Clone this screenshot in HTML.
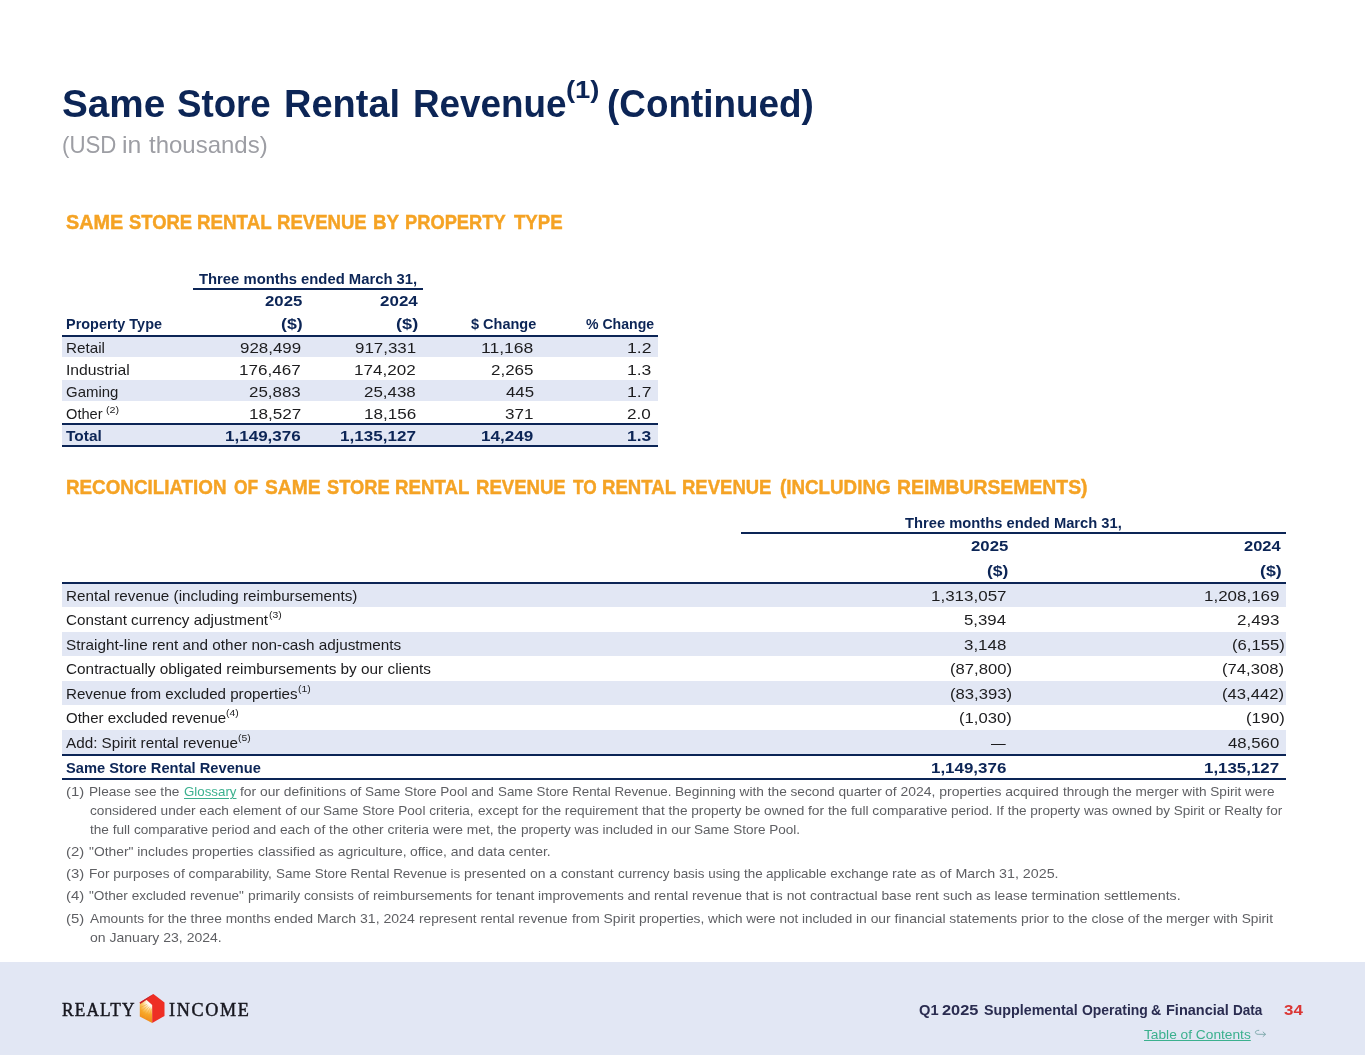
<!DOCTYPE html>
<html lang="en"><head><meta charset="utf-8"><title>Same Store Rental Revenue (Continued)</title>
<style>
html,body{margin:0;padding:0;background:#fff;}
body{width:1365px;height:1055px;position:relative;overflow:hidden;font-family:"Liberation Sans",sans-serif;}
.t{position:absolute;white-space:pre;line-height:1;transform-origin:0 0;}
.r{position:absolute;}
#sheet{position:absolute;left:0;top:0;width:1365px;height:1055px;will-change:transform;}
</style></head>
<body>
<div id="sheet">
<div class="r" style="left:0px;top:962px;width:1365px;height:93px;background:#e2e7f4;"></div>
<div class="t" style="left:61.62px;top:84.00px;font-size:39px;font-weight:700;color:#0c2556;transform:scaleX(0.9926);">Same </div>
<div class="t" style="left:177.37px;top:84.00px;font-size:39px;font-weight:700;color:#0c2556;transform:scaleX(0.9406);">Store </div>
<div class="t" style="left:284.49px;top:84.00px;font-size:39px;font-weight:700;color:#0c2556;transform:scaleX(0.9736);">Rental </div>
<div class="t" style="left:413.17px;top:84.00px;font-size:39px;font-weight:700;color:#0c2556;transform:scaleX(0.9447);">Revenue</div>
<div class="t" style="left:566.36px;top:78.00px;font-size:24px;font-weight:700;color:#0c2556;transform:scaleX(1.1411);">(1)</div>
<div class="t" style="left:606.79px;top:84.00px;font-size:39px;font-weight:700;color:#0c2556;transform:scaleX(0.9449);">(Continued)</div>
<div class="t" style="left:61.52px;top:134.00px;font-size:23.4px;font-weight:400;color:#9d9ea4;transform:scaleX(0.9518);">(USD </div>
<div class="t" style="left:122.46px;top:134.00px;font-size:23.4px;font-weight:400;color:#9d9ea4;transform:scaleX(1.0611);">in </div>
<div class="t" style="left:149.04px;top:134.00px;font-size:23.4px;font-weight:400;color:#9d9ea4;transform:scaleX(1.0252);">thousands)</div>
<div class="t" style="left:65.85px;top:212.00px;font-size:20.5px;font-weight:700;color:#f5a324;transform:scaleX(0.9661);-webkit-text-stroke:0.45px #f5a324;">SAME </div>
<div class="t" style="left:128.58px;top:212.00px;font-size:20.5px;font-weight:700;color:#f5a324;transform:scaleX(0.8973);-webkit-text-stroke:0.45px #f5a324;">STORE </div>
<div class="t" style="left:196.76px;top:212.00px;font-size:20.5px;font-weight:700;color:#f5a324;transform:scaleX(0.9151);-webkit-text-stroke:0.45px #f5a324;">RENTAL </div>
<div class="t" style="left:277.37px;top:212.00px;font-size:20.5px;font-weight:700;color:#f5a324;transform:scaleX(0.9056);-webkit-text-stroke:0.45px #f5a324;">REVENUE </div>
<div class="t" style="left:372.76px;top:212.00px;font-size:20.5px;font-weight:700;color:#f5a324;transform:scaleX(0.9178);-webkit-text-stroke:0.45px #f5a324;">BY </div>
<div class="t" style="left:405.39px;top:212.00px;font-size:20.5px;font-weight:700;color:#f5a324;transform:scaleX(0.8920);-webkit-text-stroke:0.45px #f5a324;">PROPERTY </div>
<div class="t" style="left:514.10px;top:212.00px;font-size:20.5px;font-weight:700;color:#f5a324;transform:scaleX(0.9082);-webkit-text-stroke:0.45px #f5a324;">TYPE</div>
<div class="r" style="left:62px;top:337px;width:596px;height:20px;background:#e2e7f4;"></div>
<div class="r" style="left:62px;top:380px;width:596px;height:21px;background:#e2e7f4;"></div>
<div class="r" style="left:62px;top:425px;width:596px;height:20px;background:#e2e7f4;"></div>
<div class="r" style="left:193px;top:288px;width:230px;height:2px;background:#0c2556;"></div>
<div class="r" style="left:62px;top:335px;width:596px;height:2px;background:#0c2556;"></div>
<div class="r" style="left:62px;top:423px;width:596px;height:2px;background:#0c2556;"></div>
<div class="r" style="left:62px;top:445px;width:596px;height:2px;background:#0c2556;"></div>
<div class="t" style="left:198.84px;top:271.00px;font-size:15.4px;font-weight:700;color:#0c2556;transform:scaleX(0.9626);">Three months ended March 31,</div>
<div class="t" style="left:265.43px;top:293.00px;font-size:15.4px;font-weight:700;color:#0c2556;transform:scaleX(1.0898);">2025</div>
<div class="t" style="left:380.02px;top:293.00px;font-size:15.4px;font-weight:700;color:#0c2556;transform:scaleX(1.1026);">2024</div>
<div class="t" style="left:66.20px;top:316.00px;font-size:15.4px;font-weight:700;color:#0c2556;transform:scaleX(0.9378);">Property Type</div>
<div class="t" style="left:281.43px;top:316.00px;font-size:15.4px;font-weight:700;color:#0c2556;transform:scaleX(1.1559);">($)</div>
<div class="t" style="left:396.41px;top:316.00px;font-size:15.4px;font-weight:700;color:#0c2556;transform:scaleX(1.1790);">($)</div>
<div class="t" style="left:470.51px;top:316.00px;font-size:15.4px;font-weight:700;color:#0c2556;transform:scaleX(0.9423);">$ Change</div>
<div class="t" style="left:585.66px;top:316.00px;font-size:15.4px;font-weight:700;color:#0c2556;transform:scaleX(0.9155);">% Change</div>
<div class="t" style="left:66.30px;top:341.00px;font-size:14.8px;font-weight:400;color:#1c1c1e;transform:scaleX(1.0308);">Retail</div>
<div class="t" style="left:239.72px;top:340.00px;font-size:15.4px;font-weight:400;color:#1c1c1e;transform:scaleX(1.0977);">928,499</div>
<div class="t" style="left:354.72px;top:340.00px;font-size:15.4px;font-weight:400;color:#1c1c1e;transform:scaleX(1.0980);">917,331</div>
<div class="t" style="left:481.47px;top:340.00px;font-size:15.4px;font-weight:400;color:#1c1c1e;transform:scaleX(1.1383);">11,168</div>
<div class="t" style="left:626.66px;top:340.00px;font-size:15.4px;font-weight:400;color:#1c1c1e;transform:scaleX(1.1457);">1.2</div>
<div class="t" style="left:66.30px;top:363.00px;font-size:14.8px;font-weight:400;color:#1c1c1e;transform:scaleX(1.0615);">Industrial</div>
<div class="t" style="left:239.20px;top:362.00px;font-size:15.4px;font-weight:400;color:#1c1c1e;transform:scaleX(1.1081);">176,467</div>
<div class="t" style="left:354.20px;top:362.00px;font-size:15.4px;font-weight:400;color:#1c1c1e;transform:scaleX(1.1081);">174,202</div>
<div class="t" style="left:491.25px;top:362.00px;font-size:15.4px;font-weight:400;color:#1c1c1e;transform:scaleX(1.1021);">2,265</div>
<div class="t" style="left:626.67px;top:362.00px;font-size:15.4px;font-weight:400;color:#1c1c1e;transform:scaleX(1.1394);">1.3</div>
<div class="t" style="left:66.30px;top:385.00px;font-size:14.8px;font-weight:400;color:#1c1c1e;transform:scaleX(1.0106);">Gaming</div>
<div class="t" style="left:248.95px;top:384.00px;font-size:15.4px;font-weight:400;color:#1c1c1e;transform:scaleX(1.0998);">25,883</div>
<div class="t" style="left:363.95px;top:384.00px;font-size:15.4px;font-weight:400;color:#1c1c1e;transform:scaleX(1.0998);">25,438</div>
<div class="t" style="left:505.63px;top:384.00px;font-size:15.4px;font-weight:400;color:#1c1c1e;transform:scaleX(1.0925);">445</div>
<div class="t" style="left:626.66px;top:384.00px;font-size:15.4px;font-weight:400;color:#1c1c1e;transform:scaleX(1.1457);">1.7</div>
<div class="t" style="left:66.30px;top:407.00px;font-size:14.8px;font-weight:400;color:#1c1c1e;transform:scaleX(0.9897);">Other</div>
<div class="t" style="left:248.50px;top:406.00px;font-size:15.4px;font-weight:400;color:#1c1c1e;transform:scaleX(1.1122);">18,527</div>
<div class="t" style="left:363.50px;top:406.00px;font-size:15.4px;font-weight:400;color:#1c1c1e;transform:scaleX(1.1096);">18,156</div>
<div class="t" style="left:505.35px;top:406.00px;font-size:15.4px;font-weight:400;color:#1c1c1e;transform:scaleX(1.1083);">371</div>
<div class="t" style="left:627.14px;top:406.00px;font-size:15.4px;font-weight:400;color:#1c1c1e;transform:scaleX(1.1123);">2.0</div>
<div class="t" style="left:105.73px;top:406.00px;font-size:9px;font-weight:400;color:#1c1c1e;transform:scaleX(1.1939);">(2)</div>
<div class="t" style="left:66.30px;top:429.00px;font-size:14.8px;font-weight:700;color:#0c2556;transform:scaleX(1.0447);">Total</div>
<div class="t" style="left:224.84px;top:428.00px;font-size:15.4px;font-weight:700;color:#0c2556;transform:scaleX(1.1062);">1,149,376</div>
<div class="t" style="left:339.84px;top:428.00px;font-size:15.4px;font-weight:700;color:#0c2556;transform:scaleX(1.1082);">1,135,127</div>
<div class="t" style="left:481.24px;top:428.00px;font-size:15.4px;font-weight:700;color:#0c2556;transform:scaleX(1.1127);">14,249</div>
<div class="t" style="left:626.72px;top:428.00px;font-size:15.4px;font-weight:700;color:#0c2556;transform:scaleX(1.1301);">1.3</div>
<div class="t" style="left:66.46px;top:477.00px;font-size:20.5px;font-weight:700;color:#f5a324;transform:scaleX(0.9171);-webkit-text-stroke:0.45px #f5a324;">RECONCILIATION </div>
<div class="t" style="left:233.59px;top:477.00px;font-size:20.5px;font-weight:700;color:#f5a324;transform:scaleX(0.8478);-webkit-text-stroke:0.45px #f5a324;">OF </div>
<div class="t" style="left:264.56px;top:477.00px;font-size:20.5px;font-weight:700;color:#f5a324;transform:scaleX(0.9385);-webkit-text-stroke:0.45px #f5a324;">SAME </div>
<div class="t" style="left:326.59px;top:477.00px;font-size:20.5px;font-weight:700;color:#f5a324;transform:scaleX(0.8929);-webkit-text-stroke:0.45px #f5a324;">STORE </div>
<div class="t" style="left:395.37px;top:477.00px;font-size:20.5px;font-weight:700;color:#f5a324;transform:scaleX(0.9101);-webkit-text-stroke:0.45px #f5a324;">RENTAL </div>
<div class="t" style="left:475.87px;top:477.00px;font-size:20.5px;font-weight:700;color:#f5a324;transform:scaleX(0.9056);-webkit-text-stroke:0.45px #f5a324;">REVENUE </div>
<div class="t" style="left:572.71px;top:477.00px;font-size:20.5px;font-weight:700;color:#f5a324;transform:scaleX(0.8436);-webkit-text-stroke:0.45px #f5a324;">TO </div>
<div class="t" style="left:602.17px;top:477.00px;font-size:20.5px;font-weight:700;color:#f5a324;transform:scaleX(0.9076);-webkit-text-stroke:0.45px #f5a324;">RENTAL </div>
<div class="t" style="left:682.48px;top:477.00px;font-size:20.5px;font-weight:700;color:#f5a324;transform:scaleX(0.9025);-webkit-text-stroke:0.45px #f5a324;">REVENUE </div>
<div class="t" style="left:779.98px;top:477.00px;font-size:20.5px;font-weight:700;color:#f5a324;transform:scaleX(0.9160);-webkit-text-stroke:0.45px #f5a324;">(INCLUDING </div>
<div class="t" style="left:896.72px;top:477.00px;font-size:20.5px;font-weight:700;color:#f5a324;transform:scaleX(0.9451);-webkit-text-stroke:0.45px #f5a324;">REIMBURSEMENTS)</div>
<div class="r" style="left:62px;top:584px;width:1224px;height:23px;background:#e2e7f4;"></div>
<div class="r" style="left:62px;top:632px;width:1224px;height:24px;background:#e2e7f4;"></div>
<div class="r" style="left:62px;top:681px;width:1224px;height:24px;background:#e2e7f4;"></div>
<div class="r" style="left:62px;top:730px;width:1224px;height:24px;background:#e2e7f4;"></div>
<div class="r" style="left:741px;top:532px;width:545px;height:2px;background:#0c2556;"></div>
<div class="r" style="left:62px;top:582px;width:1224px;height:2px;background:#0c2556;"></div>
<div class="r" style="left:62px;top:754px;width:1224px;height:2px;background:#0c2556;"></div>
<div class="r" style="left:62px;top:778px;width:1224px;height:2px;background:#0c2556;"></div>
<div class="t" style="left:904.84px;top:515.30px;font-size:15.4px;font-weight:700;color:#0c2556;transform:scaleX(0.9568);">Three months ended March 31,</div>
<div class="t" style="left:971.13px;top:538.30px;font-size:15.4px;font-weight:700;color:#0c2556;transform:scaleX(1.0898);">2025</div>
<div class="t" style="left:1244.44px;top:538.30px;font-size:15.4px;font-weight:700;color:#0c2556;transform:scaleX(1.0699);">2024</div>
<div class="t" style="left:987.44px;top:563.00px;font-size:15.4px;font-weight:700;color:#0c2556;transform:scaleX(1.1385);">($)</div>
<div class="t" style="left:1260.13px;top:563.00px;font-size:15.4px;font-weight:700;color:#0c2556;transform:scaleX(1.1559);">($)</div>
<div class="t" style="left:66.30px;top:589.00px;font-size:14.8px;font-weight:400;color:#1c1c1e;transform:scaleX(1.0298);">Rental revenue (including reimbursements)</div>
<div class="t" style="left:931.01px;top:588.00px;font-size:15.4px;font-weight:400;color:#1c1c1e;transform:scaleX(1.1031);">1,313,057</div>
<div class="t" style="left:1203.61px;top:588.00px;font-size:15.4px;font-weight:400;color:#1c1c1e;transform:scaleX(1.1023);">1,208,169</div>
<div class="t" style="left:66.30px;top:613.00px;font-size:14.8px;font-weight:400;color:#1c1c1e;transform:scaleX(1.0281);">Constant currency adjustment</div>
<div class="t" style="left:268.76px;top:611.00px;font-size:8.8px;font-weight:400;color:#1c1c1e;transform:scaleX(1.1784);">(3)</div>
<div class="t" style="left:964.13px;top:612.00px;font-size:15.4px;font-weight:400;color:#1c1c1e;transform:scaleX(1.0921);">5,394</div>
<div class="t" style="left:1236.55px;top:612.00px;font-size:15.4px;font-weight:400;color:#1c1c1e;transform:scaleX(1.1030);">2,493</div>
<div class="t" style="left:66.30px;top:638.00px;font-size:14.8px;font-weight:400;color:#1c1c1e;transform:scaleX(1.0345);">Straight-line rent and other non-cash adjustments</div>
<div class="t" style="left:964.16px;top:637.00px;font-size:15.4px;font-weight:400;color:#1c1c1e;transform:scaleX(1.0975);">3,148</div>
<div class="t" style="left:1231.67px;top:637.00px;font-size:15.4px;font-weight:400;color:#1c1c1e;transform:scaleX(1.0799);">(6,155)</div>
<div class="t" style="left:66.30px;top:662.00px;font-size:14.8px;font-weight:400;color:#1c1c1e;transform:scaleX(1.0368);">Contractually obligated reimbursements by our clients</div>
<div class="t" style="left:949.77px;top:661.00px;font-size:15.4px;font-weight:400;color:#1c1c1e;transform:scaleX(1.0809);">(87,800)</div>
<div class="t" style="left:1222.37px;top:661.00px;font-size:15.4px;font-weight:400;color:#1c1c1e;transform:scaleX(1.0809);">(74,308)</div>
<div class="t" style="left:66.30px;top:687.00px;font-size:14.8px;font-weight:400;color:#1c1c1e;transform:scaleX(1.0237);">Revenue from excluded properties</div>
<div class="t" style="left:297.76px;top:685.00px;font-size:8.8px;font-weight:400;color:#1c1c1e;transform:scaleX(1.1784);">(1)</div>
<div class="t" style="left:949.77px;top:686.00px;font-size:15.4px;font-weight:400;color:#1c1c1e;transform:scaleX(1.0809);">(83,393)</div>
<div class="t" style="left:1222.37px;top:686.00px;font-size:15.4px;font-weight:400;color:#1c1c1e;transform:scaleX(1.0809);">(43,442)</div>
<div class="t" style="left:66.30px;top:711.00px;font-size:14.8px;font-weight:400;color:#1c1c1e;transform:scaleX(1.0135);">Other excluded revenue</div>
<div class="t" style="left:226.16px;top:709.00px;font-size:8.8px;font-weight:400;color:#1c1c1e;transform:scaleX(1.1784);">(4)</div>
<div class="t" style="left:959.07px;top:710.00px;font-size:15.4px;font-weight:400;color:#1c1c1e;transform:scaleX(1.0799);">(1,030)</div>
<div class="t" style="left:1245.57px;top:710.00px;font-size:15.4px;font-weight:400;color:#1c1c1e;transform:scaleX(1.0785);">(190)</div>
<div class="t" style="left:66.30px;top:736.00px;font-size:14.8px;font-weight:400;color:#1c1c1e;transform:scaleX(1.0305);">Add: Spirit rental revenue</div>
<div class="t" style="left:238.16px;top:734.00px;font-size:8.8px;font-weight:400;color:#1c1c1e;transform:scaleX(1.1784);">(5)</div>
<div class="t" style="left:991.00px;top:735.00px;font-size:15.4px;font-weight:400;color:#1c1c1e;transform:scaleX(0.9551);">—</div>
<div class="t" style="left:1227.73px;top:735.00px;font-size:15.4px;font-weight:400;color:#1c1c1e;transform:scaleX(1.0877);">48,560</div>
<div class="t" style="left:66.30px;top:761.00px;font-size:14.8px;font-weight:700;color:#0c2556;transform:scaleX(0.9916);">Same Store Rental Revenue</div>
<div class="t" style="left:931.25px;top:760.00px;font-size:15.4px;font-weight:700;color:#0c2556;transform:scaleX(1.1002);">1,149,376</div>
<div class="t" style="left:1203.95px;top:760.00px;font-size:15.4px;font-weight:700;color:#0c2556;transform:scaleX(1.0962);">1,135,127</div>
<div class="t" style="left:66.00px;top:785.00px;font-size:13px;font-weight:400;color:#5e5f63;transform:scaleX(1.1469);">(1)</div>
<div class="t" style="left:89.48px;top:785.00px;font-size:13px;font-weight:400;color:#5e5f63;transform:scaleX(1.0503);">Please see the </div>
<div class="t" style="left:183.62px;top:785.00px;font-size:13px;font-weight:400;color:#5e5f63;transform:scaleX(1.0234);"><span style="color:#3bb08e;text-decoration:underline;text-decoration-thickness:1px;text-underline-offset:1.5px;">Glossary</span> </div>
<div class="t" style="left:239.81px;top:785.00px;font-size:13px;font-weight:400;color:#5e5f63;transform:scaleX(1.0635);">for our definitions of </div>
<div class="t" style="left:365.09px;top:785.00px;font-size:13px;font-weight:400;color:#5e5f63;transform:scaleX(1.0424);">Same Store Pool and </div>
<div class="t" style="left:497.69px;top:785.00px;font-size:13px;font-weight:400;color:#5e5f63;transform:scaleX(1.0259);">Same Store Rental Revenue. </div>
<div class="t" style="left:674.88px;top:785.00px;font-size:13px;font-weight:400;color:#5e5f63;transform:scaleX(1.0517);">Beginning with the second quarter </div>
<div class="t" style="left:885.43px;top:785.00px;font-size:13px;font-weight:400;color:#5e5f63;transform:scaleX(1.0735);">of 2024, properties acquired </div>
<div class="t" style="left:1063.10px;top:785.00px;font-size:13px;font-weight:400;color:#5e5f63;transform:scaleX(1.0454);">through the merger with Spirit were</div>
<div class="t" style="left:89.53px;top:804.00px;font-size:13px;font-weight:400;color:#5e5f63;transform:scaleX(1.0506);">considered under each element of our </div>
<div class="t" style="left:323.39px;top:804.00px;font-size:13px;font-weight:400;color:#5e5f63;transform:scaleX(1.0420);">Same Store Pool criteria, </div>
<div class="t" style="left:477.73px;top:804.00px;font-size:13px;font-weight:400;color:#5e5f63;transform:scaleX(1.0541);">except for the requirement </div>
<div class="t" style="left:641.50px;top:804.00px;font-size:13px;font-weight:400;color:#5e5f63;transform:scaleX(1.0489);">that the property be owned </div>
<div class="t" style="left:807.51px;top:804.00px;font-size:13px;font-weight:400;color:#5e5f63;transform:scaleX(1.0606);">for the full comparative </div>
<div class="t" style="left:950.83px;top:804.00px;font-size:13px;font-weight:400;color:#5e5f63;transform:scaleX(1.0453);">period. If the property was </div>
<div class="t" style="left:1111.73px;top:804.00px;font-size:13px;font-weight:400;color:#5e5f63;transform:scaleX(1.0422);">owned by Spirit or Realty for</div>
<div class="t" style="left:89.90px;top:823.00px;font-size:13px;font-weight:400;color:#5e5f63;transform:scaleX(1.0476);">the full comparative period </div>
<div class="t" style="left:253.43px;top:823.00px;font-size:13px;font-weight:400;color:#5e5f63;transform:scaleX(1.0638);">and each of the other criteria </div>
<div class="t" style="left:433.33px;top:823.00px;font-size:13px;font-weight:400;color:#5e5f63;transform:scaleX(1.0622);">were met, the </div>
<div class="t" style="left:520.83px;top:823.00px;font-size:13px;font-weight:400;color:#5e5f63;transform:scaleX(1.0443);">property was included in our </div>
<div class="t" style="left:694.39px;top:823.00px;font-size:13px;font-weight:400;color:#5e5f63;transform:scaleX(1.0417);">Same Store Pool.</div>
<div class="t" style="left:66.00px;top:845.00px;font-size:13px;font-weight:400;color:#5e5f63;transform:scaleX(1.1469);">(2)</div>
<div class="t" style="left:89.43px;top:845.00px;font-size:13px;font-weight:400;color:#5e5f63;transform:scaleX(1.0646);">"Other" includes properties </div>
<div class="t" style="left:257.73px;top:845.00px;font-size:13px;font-weight:400;color:#5e5f63;transform:scaleX(1.0706);">classified as agriculture, </div>
<div class="t" style="left:410.13px;top:845.00px;font-size:13px;font-weight:400;color:#5e5f63;transform:scaleX(1.0710);">office, and data center.</div>
<div class="t" style="left:66.00px;top:867.00px;font-size:13px;font-weight:400;color:#5e5f63;transform:scaleX(1.1469);">(3)</div>
<div class="t" style="left:89.38px;top:867.00px;font-size:13px;font-weight:400;color:#5e5f63;transform:scaleX(1.0519);">For purposes of comparability, </div>
<div class="t" style="left:276.09px;top:867.00px;font-size:13px;font-weight:400;color:#5e5f63;transform:scaleX(1.0326);">Same Store Rental Revenue is </div>
<div class="t" style="left:464.13px;top:867.00px;font-size:13px;font-weight:400;color:#5e5f63;transform:scaleX(1.0733);">presented on a constant </div>
<div class="t" style="left:617.73px;top:867.00px;font-size:13px;font-weight:400;color:#5e5f63;transform:scaleX(1.0320);">currency basis using the </div>
<div class="t" style="left:766.13px;top:867.00px;font-size:13px;font-weight:400;color:#5e5f63;transform:scaleX(1.0337);">applicable exchange </div>
<div class="t" style="left:892.40px;top:867.00px;font-size:13px;font-weight:400;color:#5e5f63;transform:scaleX(1.0977);">rate as of March 31, 2025.</div>
<div class="t" style="left:66.00px;top:889.00px;font-size:13px;font-weight:400;color:#5e5f63;transform:scaleX(1.1469);">(4)</div>
<div class="t" style="left:89.43px;top:889.00px;font-size:13px;font-weight:400;color:#5e5f63;transform:scaleX(1.0468);">"Other excluded revenue" </div>
<div class="t" style="left:248.13px;top:889.00px;font-size:13px;font-weight:400;color:#5e5f63;transform:scaleX(1.0613);">primarily consists of </div>
<div class="t" style="left:373.10px;top:889.00px;font-size:13px;font-weight:400;color:#5e5f63;transform:scaleX(1.0640);">reimbursements for tenant </div>
<div class="t" style="left:538.40px;top:889.00px;font-size:13px;font-weight:400;color:#5e5f63;transform:scaleX(1.0499);">improvements and rental </div>
<div class="t" style="left:692.40px;top:889.00px;font-size:13px;font-weight:400;color:#5e5f63;transform:scaleX(1.0647);">revenue that is not </div>
<div class="t" style="left:810.13px;top:889.00px;font-size:13px;font-weight:400;color:#5e5f63;transform:scaleX(1.0622);">contractual base rent </div>
<div class="t" style="left:942.93px;top:889.00px;font-size:13px;font-weight:400;color:#5e5f63;transform:scaleX(1.0640);">such as lease termination </div>
<div class="t" style="left:1103.63px;top:889.00px;font-size:13px;font-weight:400;color:#5e5f63;transform:scaleX(1.0937);">settlements.</div>
<div class="t" style="left:66.00px;top:912.00px;font-size:13px;font-weight:400;color:#5e5f63;transform:scaleX(1.1469);">(5)</div>
<div class="t" style="left:89.97px;top:912.00px;font-size:13px;font-weight:400;color:#5e5f63;transform:scaleX(1.0548);">Amounts for the three months </div>
<div class="t" style="left:274.43px;top:912.00px;font-size:13px;font-weight:400;color:#5e5f63;transform:scaleX(1.0819);">ended March 31, 2024 </div>
<div class="t" style="left:419.10px;top:912.00px;font-size:13px;font-weight:400;color:#5e5f63;transform:scaleX(1.0492);">represent rental revenue </div>
<div class="t" style="left:571.51px;top:912.00px;font-size:13px;font-weight:400;color:#5e5f63;transform:scaleX(1.0652);">from Spirit properties, </div>
<div class="t" style="left:707.73px;top:912.00px;font-size:13px;font-weight:400;color:#5e5f63;transform:scaleX(1.0401);">which were not included </div>
<div class="t" style="left:855.80px;top:912.00px;font-size:13px;font-weight:400;color:#5e5f63;transform:scaleX(1.0672);">in our financial statements </div>
<div class="t" style="left:1020.83px;top:912.00px;font-size:13px;font-weight:400;color:#5e5f63;transform:scaleX(1.0715);">prior to the close of the </div>
<div class="t" style="left:1166.40px;top:912.00px;font-size:13px;font-weight:400;color:#5e5f63;transform:scaleX(1.0579);">merger with Spirit</div>
<div class="t" style="left:89.53px;top:931.00px;font-size:13px;font-weight:400;color:#5e5f63;transform:scaleX(1.0785);">on January 23, 2024.</div>
<div class="t" style="left:918.70px;top:1003.00px;font-size:14.8px;font-weight:700;color:#2a2c50;transform:scaleX(0.9925);">Q1 </div>
<div class="t" style="left:942.44px;top:1003.00px;font-size:14.8px;font-weight:700;color:#2a2c50;transform:scaleX(1.1057);">2025 </div>
<div class="t" style="left:983.70px;top:1003.00px;font-size:14.8px;font-weight:700;color:#2a2c50;transform:scaleX(0.9656);">Supplemental </div>
<div class="t" style="left:1081.53px;top:1003.00px;font-size:14.8px;font-weight:700;color:#2a2c50;transform:scaleX(0.9415);">Operating </div>
<div class="t" style="left:1151.49px;top:1003.00px;font-size:14.8px;font-weight:700;color:#2a2c50;transform:scaleX(0.9594);">&amp; </div>
<div class="t" style="left:1166.04px;top:1003.00px;font-size:14.8px;font-weight:700;color:#2a2c50;transform:scaleX(0.9802);">Financial </div>
<div class="t" style="left:1232.70px;top:1003.00px;font-size:14.8px;font-weight:700;color:#2a2c50;transform:scaleX(0.9166);">Data</div>
<div class="t" style="left:1283.93px;top:1003.00px;font-size:14.8px;font-weight:700;color:#db3634;transform:scaleX(1.1452);">34</div>
<div class="t" style="left:1143.70px;top:1028.00px;font-size:13px;font-weight:400;color:#3bb08e;transform:scaleX(1.0554);text-decoration:underline;text-decoration-thickness:1px;text-underline-offset:0.6px;">Table of Contents</div>
<svg class="r" style="left:1252px;top:1027px" width="16" height="12" viewBox="1252 1027 16 12"><path d="M1258.8 1030.3 C1254.3 1030.1 1254.3 1034.3 1258.2 1034.3 H1265.2 M1263.1 1032 L1265.5 1034.3 L1263.1 1036.5" fill="none" stroke="#6f9fa0" stroke-width="0.85" stroke-linecap="round" stroke-linejoin="round"/></svg>
<div class="t" style="left:62.21px;top:1000.00px;font-size:19.5px;font-weight:400;color:#17171f;transform:scaleX(0.8885);font-family:'Liberation Serif',serif;letter-spacing:1.3px;-webkit-text-stroke:0.5px #17171f;">REALTY</div>
<div class="t" style="left:169.35px;top:1000.00px;font-size:19.5px;font-weight:400;color:#17171f;transform:scaleX(0.9292);font-family:'Liberation Serif',serif;letter-spacing:1.8px;-webkit-text-stroke:0.5px #17171f;">INCOME</div>
<div class="r" style="left:139px;top:999px;width:14px;height:25px;background:radial-gradient(circle 17px at 11.3px 4.2px,#ffffff 0,#fff6e4 22%,#fcd07c 42%,#f7a829 68%,#f18d1c 100%);clip-path:polygon(0.8px 4px,7.2px 0.6px,13.2px 6px,13.2px 24px,0.8px 17.4px);"></div>
<svg class="r" style="left:138px;top:992px" width="29" height="33" viewBox="138 992 29 33">
<g stroke="#f6a22a" stroke-width="0.7" stroke-opacity="0.75" fill="none">
<path d="M149.2 1006.5 L141.0 1016.6 M148.2 1005.4 L140.2 1012.0 M150.3 1007.6 L144.6 1018.8 M151.3 1008.8 L148.6 1020.8 M147.2 1004.3 L140.2 1007.6"/>
</g>
<polygon points="153.4,994 164.5,1002.5 164.5,1015.9 152.2,1023.1 152.2,1005 146.4,999.8 140.4,1003.7 139.6,1002.4" fill="#ee2e24"/>
<polygon points="153.4,994 146.4,999.8 140.4,1003.7 139.6,1002.4" fill="#c4262c"/>
</svg>
</div>
</body></html>
